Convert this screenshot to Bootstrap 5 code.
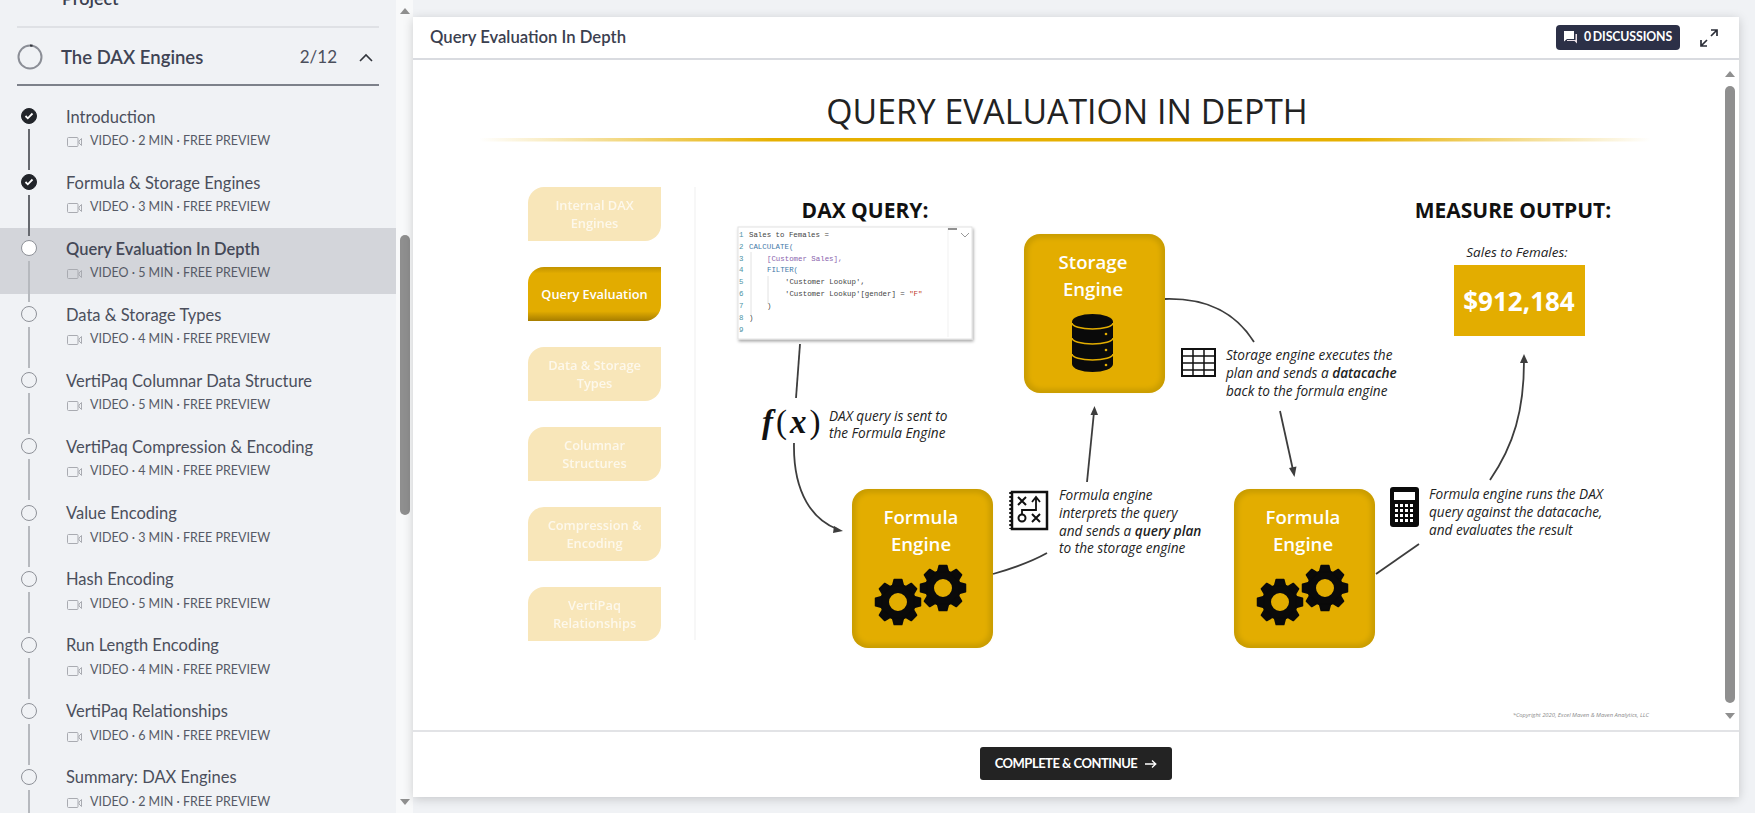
<!DOCTYPE html>
<html lang="en"><head><meta charset="utf-8"><title>Query Evaluation In Depth</title>
<link rel="stylesheet" href="https://cdn.jsdelivr.net/npm/bootstrap@5.3.0/dist/css/bootstrap.min.css">
<style>
html,body{height:813px;overflow:hidden}
body{background:#f0f2f5;font-family:Lato,"Liberation Sans",sans-serif;color:#3b404f}
.side-pane{width:396px;height:813px;overflow:hidden;flex:none}
.side-project{margin:-16px 17px 0;padding:0 0 0 45px;height:44px;border-bottom:2px solid #dfe1e5;font-size:18px;font-weight:600;line-height:28px}
.side-section{margin:0 17px 10px;height:58px;padding-top:2px;border-bottom:2px solid #7d818a}
.side-section h2{font-size:18.5px;font-weight:600;margin:0 0 0 18px;color:#3f4454}
.sec-count{font-size:17px;color:#4b4f5c;margin-right:22px}
.sec-chev{margin-right:6px}
.lesson-row{height:66.1px;padding-left:21px;color:#4b4f5c}
.lesson-row.is-current{background:#d3d5da}
.lesson-row.is-current .lesson-name{font-weight:600;color:#444857}
.lesson-rail{width:16px;flex:none;margin-right:29px;padding-top:12px}
.lesson-dot{width:16px;height:16px;border-radius:50%;border:1.5px solid #8e9198;background:transparent;flex:none}
.is-done .lesson-dot{background:#22252a;border-color:#22252a}
.is-current .lesson-dot{background:#fff}
.lesson-line{width:2px;height:41px;margin-top:5px;background:#b6b9be;flex:none}
.is-done .lesson-line{background:#66696f}
.lesson-name{font-size:16.5px;line-height:20px;padding-top:10.5px;white-space:nowrap}
.lesson-meta{font-size:12.5px;line-height:16px;margin-top:6.5px;white-space:nowrap;color:#565a66}
.lesson-meta svg{margin:0 8px 0 1px;vertical-align:-2px}
.fake-scroll{width:17px;height:813px;flex:none;background:#f8f9fa}
.fake-thumb{width:10px;background:#8f8f8f;border-radius:5px}
.side-thumb{height:280px;margin:221px 0 0 4px}
.arrow-up{width:0;height:0;border-left:5px solid transparent;border-right:5px solid transparent;border-bottom:6px solid #8f8f8f}
.arrow-down{width:0;height:0;border-left:5px solid transparent;border-right:5px solid transparent;border-top:6px solid #8f8f8f}
.main-pane{padding:17px 16px 16px 0;height:813px}
.lesson-card{height:780px;box-shadow:0 2px 10px rgba(0,0,0,.18)}
.lesson-head{height:43px;padding:0 21px 0 17px;background:#fff;border-bottom:2px solid #d9dbe0}
.lesson-head h1{font-size:16.7px;font-weight:600;margin:0;color:#3b404f}
.disc-btn{height:25px;width:124px;padding:0;background:#2c3047;color:#fff;font-size:12.3px;font-weight:700;border:0;border-radius:4px;margin-right:20px;letter-spacing:-.1px;word-spacing:-1px;column-gap:6px}
.slide-wrap{height:670px}
.slide-art{display:block;width:1311px;height:670px;flex:none}
.slide-scroll{width:15px;height:670px;flex:none}
.slide-up{margin:11px 0 0 1px}
.slide-thumb{height:617px;margin:9px 0 10px 1px}
.slide-down{margin-left:1px}
.lesson-foot{height:67px;background:#fff;border-top:2px solid #e2e3e6;padding-bottom:2px}
.next-btn{width:192px;height:33px;padding:0;background:#232323;color:#fff;font-size:13px;font-weight:700;border:0;border-radius:3px;letter-spacing:-.5px}
.next-btn:hover{background:#232323;color:#fff}
.disc-btn:hover{background:#2c3047;color:#fff}
.sl{font-family:"Open Sans","Liberation Sans",sans-serif}
.sl-note{font-size:13.6px;font-style:italic;fill:#222}
.sl-note tspan{font-weight:600}
.sl-head{font-size:21px;font-weight:700;fill:#111;text-anchor:middle}
.sl-tab{font-size:12.8px;font-weight:600;fill:#fff;text-anchor:middle}
.sl-eng{font-size:18.6px;font-weight:600;fill:#fff;text-anchor:middle}
.sl-code{font-family:"Liberation Mono",monospace;font-size:7.4px;fill:#444}
.sl-num{font-family:"Liberation Mono",monospace;font-size:7.4px;fill:#4d93a5}
.flow{fill:none;stroke:#3d3d3d;stroke-width:1.8}
</style></head>
<body class="d-flex">
<aside class="side-pane">
  <div class="side-project">Project</div>
  <div class="side-section d-flex align-items-center">
    <svg width="26" height="26" viewBox="0 0 26 26"><circle cx="13" cy="13" r="11.5" fill="none" stroke="#8b8e96" stroke-width="2"/><path d="M13 1.500A11.500 11.500 0 0 1 15.500 1.800" fill="none" stroke="#33363d" stroke-width="2"/></svg>
    <h2 class="flex-grow-1">The DAX Engines</h2>
    <span class="sec-count">2/12</span>
    <svg width="14" height="9" viewBox="0 0 14 9" class="sec-chev"><path d="M1 8l6-6 6 6" fill="none" stroke="#33363d" stroke-width="1.600"/></svg>
  </div>
  <div class="lesson-row is-done d-flex"><div class="lesson-rail d-flex flex-column align-items-center"><div class="lesson-dot d-flex align-items-center justify-content-center"><svg width="10" height="8" viewBox="0 0 10 8"><path d="M1.500 4l2.300 2.300L8.500 1.500" fill="none" stroke="#fff" stroke-width="1.800"/></svg></div><div class="lesson-line"></div></div><div><div class="lesson-name">Introduction</div><div class="lesson-meta"><svg width="15" height="10" viewBox="0 0 15 10"><rect x=".5" y=".5" width="10.500" height="9" rx="1" fill="none" stroke="#a9abb1"/><path d="M14.500 1.500v7l-2.500-2.500v-2z" fill="none" stroke="#a9abb1"/></svg>VIDEO · 2 MIN · FREE PREVIEW</div></div></div>
  <div class="lesson-row is-done d-flex"><div class="lesson-rail d-flex flex-column align-items-center"><div class="lesson-dot d-flex align-items-center justify-content-center"><svg width="10" height="8" viewBox="0 0 10 8"><path d="M1.500 4l2.300 2.300L8.500 1.500" fill="none" stroke="#fff" stroke-width="1.800"/></svg></div><div class="lesson-line"></div></div><div><div class="lesson-name">Formula &amp; Storage Engines</div><div class="lesson-meta"><svg width="15" height="10" viewBox="0 0 15 10"><rect x=".5" y=".5" width="10.500" height="9" rx="1" fill="none" stroke="#a9abb1"/><path d="M14.500 1.500v7l-2.500-2.500v-2z" fill="none" stroke="#a9abb1"/></svg>VIDEO · 3 MIN · FREE PREVIEW</div></div></div>
  <div class="lesson-row is-current d-flex"><div class="lesson-rail d-flex flex-column align-items-center"><div class="lesson-dot"></div><div class="lesson-line"></div></div><div><div class="lesson-name">Query Evaluation In Depth</div><div class="lesson-meta"><svg width="15" height="10" viewBox="0 0 15 10"><rect x=".5" y=".5" width="10.500" height="9" rx="1" fill="none" stroke="#a9abb1"/><path d="M14.500 1.500v7l-2.500-2.500v-2z" fill="none" stroke="#a9abb1"/></svg>VIDEO · 5 MIN · FREE PREVIEW</div></div></div>
  <div class="lesson-row d-flex"><div class="lesson-rail d-flex flex-column align-items-center"><div class="lesson-dot"></div><div class="lesson-line"></div></div><div><div class="lesson-name">Data &amp; Storage Types</div><div class="lesson-meta"><svg width="15" height="10" viewBox="0 0 15 10"><rect x=".5" y=".5" width="10.500" height="9" rx="1" fill="none" stroke="#a9abb1"/><path d="M14.500 1.500v7l-2.500-2.500v-2z" fill="none" stroke="#a9abb1"/></svg>VIDEO · 4 MIN · FREE PREVIEW</div></div></div>
  <div class="lesson-row d-flex"><div class="lesson-rail d-flex flex-column align-items-center"><div class="lesson-dot"></div><div class="lesson-line"></div></div><div><div class="lesson-name">VertiPaq Columnar Data Structure</div><div class="lesson-meta"><svg width="15" height="10" viewBox="0 0 15 10"><rect x=".5" y=".5" width="10.500" height="9" rx="1" fill="none" stroke="#a9abb1"/><path d="M14.500 1.500v7l-2.500-2.500v-2z" fill="none" stroke="#a9abb1"/></svg>VIDEO · 5 MIN · FREE PREVIEW</div></div></div>
  <div class="lesson-row d-flex"><div class="lesson-rail d-flex flex-column align-items-center"><div class="lesson-dot"></div><div class="lesson-line"></div></div><div><div class="lesson-name">VertiPaq Compression &amp; Encoding</div><div class="lesson-meta"><svg width="15" height="10" viewBox="0 0 15 10"><rect x=".5" y=".5" width="10.500" height="9" rx="1" fill="none" stroke="#a9abb1"/><path d="M14.500 1.500v7l-2.500-2.500v-2z" fill="none" stroke="#a9abb1"/></svg>VIDEO · 4 MIN · FREE PREVIEW</div></div></div>
  <div class="lesson-row d-flex"><div class="lesson-rail d-flex flex-column align-items-center"><div class="lesson-dot"></div><div class="lesson-line"></div></div><div><div class="lesson-name">Value Encoding</div><div class="lesson-meta"><svg width="15" height="10" viewBox="0 0 15 10"><rect x=".5" y=".5" width="10.500" height="9" rx="1" fill="none" stroke="#a9abb1"/><path d="M14.500 1.500v7l-2.500-2.500v-2z" fill="none" stroke="#a9abb1"/></svg>VIDEO · 3 MIN · FREE PREVIEW</div></div></div>
  <div class="lesson-row d-flex"><div class="lesson-rail d-flex flex-column align-items-center"><div class="lesson-dot"></div><div class="lesson-line"></div></div><div><div class="lesson-name">Hash Encoding</div><div class="lesson-meta"><svg width="15" height="10" viewBox="0 0 15 10"><rect x=".5" y=".5" width="10.500" height="9" rx="1" fill="none" stroke="#a9abb1"/><path d="M14.500 1.500v7l-2.500-2.500v-2z" fill="none" stroke="#a9abb1"/></svg>VIDEO · 5 MIN · FREE PREVIEW</div></div></div>
  <div class="lesson-row d-flex"><div class="lesson-rail d-flex flex-column align-items-center"><div class="lesson-dot"></div><div class="lesson-line"></div></div><div><div class="lesson-name">Run Length Encoding</div><div class="lesson-meta"><svg width="15" height="10" viewBox="0 0 15 10"><rect x=".5" y=".5" width="10.500" height="9" rx="1" fill="none" stroke="#a9abb1"/><path d="M14.500 1.500v7l-2.500-2.500v-2z" fill="none" stroke="#a9abb1"/></svg>VIDEO · 4 MIN · FREE PREVIEW</div></div></div>
  <div class="lesson-row d-flex"><div class="lesson-rail d-flex flex-column align-items-center"><div class="lesson-dot"></div><div class="lesson-line"></div></div><div><div class="lesson-name">VertiPaq Relationships</div><div class="lesson-meta"><svg width="15" height="10" viewBox="0 0 15 10"><rect x=".5" y=".5" width="10.500" height="9" rx="1" fill="none" stroke="#a9abb1"/><path d="M14.500 1.500v7l-2.500-2.500v-2z" fill="none" stroke="#a9abb1"/></svg>VIDEO · 6 MIN · FREE PREVIEW</div></div></div>
  <div class="lesson-row d-flex"><div class="lesson-rail d-flex flex-column align-items-center"><div class="lesson-dot"></div><div class="lesson-line"></div></div><div><div class="lesson-name">Summary: DAX Engines</div><div class="lesson-meta"><svg width="15" height="10" viewBox="0 0 15 10"><rect x=".5" y=".5" width="10.500" height="9" rx="1" fill="none" stroke="#a9abb1"/><path d="M14.500 1.500v7l-2.500-2.500v-2z" fill="none" stroke="#a9abb1"/></svg>VIDEO · 2 MIN · FREE PREVIEW</div></div></div>
</aside>
<div class="fake-scroll d-flex flex-column">
  <div class="arrow-up ms-1 mt-2"></div>
  <div class="fake-thumb side-thumb"></div>
  <div class="arrow-down ms-1 mt-auto mb-2"></div>
</div>
<main class="main-pane flex-grow-1">
  <div class="card lesson-card rounded-0 border-0">
    <div class="lesson-head d-flex align-items-center">
      <h1 class="flex-grow-1">Query Evaluation In Depth</h1>
      <button class="btn disc-btn d-flex align-items-center justify-content-center" type="button"><svg width="14" height="13" viewBox="0 0 14 13"><path d="M0 0h10v8H3L0 10.500z" fill="#fff"/><path d="M11.500 3H13v9.500L10.500 10H3V9h8.500z" fill="#e9dfe6"/></svg>0 DISCUSSIONS</button>
      <svg width="18" height="18" viewBox="0 0 18 18"><path d="M11 1h6v6M17 1l-6 6M7 17H1v-6M1 17l6-6" fill="none" stroke="#2b2e38" stroke-width="1.700"/></svg>
    </div>
    <div class="slide-wrap d-flex bg-white">
      <svg class="slide-art sl" viewBox="414 60 1311 670" xmlns="http://www.w3.org/2000/svg">
        <defs>
          <linearGradient id="rule"><stop offset="0" stop-color="#e6b000" stop-opacity="0"/><stop offset=".25" stop-color="#e6b000"/><stop offset=".75" stop-color="#e6b000"/><stop offset="1" stop-color="#e6b000" stop-opacity="0"/></linearGradient>
          <linearGradient id="activetab" x1="0" y1="0" x2="0" y2="1"><stop offset="0" stop-color="#c29300"/><stop offset=".12" stop-color="#e2ac00"/><stop offset=".82" stop-color="#e2ac00"/><stop offset="1" stop-color="#a67d00"/></linearGradient>
          <filter id="soft" x="-10%" y="-10%" width="120%" height="120%"><feGaussianBlur stdDeviation="2.500"/></filter>
          <filter id="boxshade" x="-5%" y="-5%" width="112%" height="112%"><feDropShadow dx="1" dy="2" stdDeviation="1.500" flood-color="#000" flood-opacity=".35"/></filter>
          <path id="tabshape" d="M0 16a16 16 0 0 1 16-16H133V38a16 16 0 0 1-16 16H0Z"/>
          <path id="tooth" d="M-5.500-16L-3.800-22.500H3.800L5.500-16Z" fill="#0a0a0a" stroke="#0a0a0a" stroke-width="1.500" stroke-linejoin="round"/>
          <g id="gear"><circle r="13.500" fill="none" stroke="#0a0a0a" stroke-width="9"/><use href="#tooth"/><use href="#tooth" transform="rotate(45)"/><use href="#tooth" transform="rotate(90)"/><use href="#tooth" transform="rotate(135)"/><use href="#tooth" transform="rotate(180)"/><use href="#tooth" transform="rotate(225)"/><use href="#tooth" transform="rotate(270)"/><use href="#tooth" transform="rotate(315)"/></g>
          <g id="engine"><rect width="141" height="159" rx="16" fill="#c99c00"/><rect x="4" y="4" width="133" height="151" rx="13" fill="#e3ad00" filter="url(#soft)"/></g>
        </defs>
        <text x="1068" y="124" font-size="33.800" text-anchor="middle" fill="#222">QUERY EVALUATION IN DEPTH</text>
        <rect x="480" y="138" width="1172" height="3.500" fill="url(#rule)"/>

        <g fill="#f8e6b9"><use href="#tabshape" x="529" y="187"/><use href="#tabshape" x="529" y="347"/><use href="#tabshape" x="529" y="427"/><use href="#tabshape" x="529" y="507"/><use href="#tabshape" x="529" y="587"/></g>
        <path d="M529 283a16 16 0 0 1 16-16H662V305a16 16 0 0 1-16 16H529Z" fill="url(#activetab)"/>
        <g class="sl-tab" opacity=".72">
          <text x="595.500" y="210">Internal DAX</text><text x="595.500" y="228">Engines</text>
          <text x="595.500" y="370">Data &amp; Storage</text><text x="595.500" y="388">Types</text>
          <text x="595.500" y="450">Columnar</text><text x="595.500" y="468">Structures</text>
          <text x="595.500" y="530">Compression &amp;</text><text x="595.500" y="548">Encoding</text>
          <text x="595.500" y="610">VertiPaq</text><text x="595.500" y="628">Relationships</text>
        </g>
        <text class="sl-tab" x="595.500" y="299">Query Evaluation</text>
        <line x1="696" y1="187" x2="696" y2="640" stroke="#efefef" stroke-width="1"/>

        <text class="sl-head" x="866" y="218">DAX QUERY:</text>
        <rect x="739" y="227" width="234" height="112" fill="#fff" stroke="#e2e2e2" filter="url(#boxshade)"/>
        <line x1="949" y1="228" x2="949" y2="337" stroke="#f1f1f1"/>
        <line x1="949" y1="229" x2="958" y2="229" stroke="#555" stroke-width="1.300"/>
        <path d="M962 233l4 4 4-4" fill="none" stroke="#999"/>
        <g stroke="#e2e2e2"><line x1="752" y1="252" x2="752" y2="316"/><line x1="769" y1="276" x2="769" y2="304"/></g>
        <g class="sl-num"><text x="740" y="237">1</text><text x="740" y="249">2</text><text x="740" y="261">3</text><text x="740" y="272">4</text><text x="740" y="284">5</text><text x="740" y="296">6</text><text x="740" y="308">7</text><text x="740" y="320">8</text><text x="740" y="332">9</text></g>
        <g class="sl-code">
          <text x="750" y="237">Sales to Females =</text>
          <text x="750" y="249" fill="#3f78a8">CALCULATE(</text>
          <text x="768" y="261" fill="#8a63ad">[Customer Sales],</text>
          <text x="768" y="272" fill="#3f78a8">FILTER(</text>
          <text x="786" y="284">'Customer Lookup',</text>
          <text x="786" y="296">'Customer Lookup'[gender] = <tspan fill="#c0392b">"F"</tspan></text>
          <text x="768" y="308">)</text>
          <text x="750" y="320">)</text>
        </g>
        <path class="flow" d="M801 344L797 398"/>
        <text x="763" y="433" font-family="Liberation Serif" font-size="33" font-weight="700" font-style="italic" fill="#111" letter-spacing="3">f<tspan font-style="normal" font-weight="400">(</tspan>x<tspan font-style="normal" font-weight="400">)</tspan></text>
        <text class="sl-note" x="830" y="421">DAX query is sent to</text>
        <text class="sl-note" x="830" y="438">the Formula Engine</text>
        <path class="flow" d="M795 443C794 495 815 520 838 529"/>
        <path d="M844 531l-9-5-1 7z" fill="#3d3d3d"/>

        <use href="#engine" x="853" y="489"/>
        <text class="sl-eng" x="922" y="524">Formula</text><text class="sl-eng" x="922" y="551">Engine</text>
        <use href="#gear" x="899" y="602"/><use href="#gear" x="944" y="588"/>

        <use href="#engine" x="1025" y="234"/>
        <text class="sl-eng" x="1094" y="269">Storage</text><text class="sl-eng" x="1094" y="296">Engine</text>
        <path d="M1073 322a20.500 8 0 0 1 41 0V364a20.500 8 0 0 1-41 0Z" fill="#0a0a0a"/>
        <g fill="none" stroke="#e3ad00" stroke-width="1.600"><path d="M1073 323a20.500 6 0 0 0 41 0"/><path d="M1073 338a20.500 6 0 0 0 41 0"/><path d="M1073 354a20.500 6 0 0 0 41 0"/></g>
        <g fill="#e3ad00"><circle cx="1107" cy="334" r="1.300"/><circle cx="1107" cy="350" r="1.300"/><circle cx="1107" cy="365" r="1.300"/></g>

        <path class="flow" d="M1166 299C1205 298 1235 310 1255 342"/>
        <g fill="none" stroke="#111"><rect x="1183" y="349" width="33" height="27" stroke-width="2"/><path d="M1183 356H1216M1183 363H1216M1183 370H1216M1194 349V376M1205 349V376" stroke-width="1.500"/></g>
        <text class="sl-note" x="1227" y="360">Storage engine executes the</text>
        <text class="sl-note" x="1227" y="378">plan and sends a <tspan>datacache</tspan></text>
        <text class="sl-note" x="1227" y="396">back to the formula engine</text>

        <path class="flow" d="M1088 482L1095 412"/>
        <path d="M1095.500 406l-4 9h7.500z" fill="#3d3d3d"/>
        <g fill="none" stroke="#111"><rect x="1013" y="492" width="35" height="37" stroke-width="2.500"/><path d="M1019 497l8 8m0-8l-8 8M1033 514l8 8m0-8l-8 8" stroke-width="2"/><circle cx="1023" cy="518" r="3.500" stroke-width="2"/><path d="M1023 514V510H1037V498M1033 502l4-5 4 5" stroke-width="1.800"/><path d="M1012 492v37" stroke-width="3.500" stroke-dasharray="2 2"/></g>
        <text class="sl-note" x="1060" y="500">Formula engine</text>
        <text class="sl-note" x="1060" y="518">interprets the query</text>
        <text class="sl-note" x="1060" y="536">and sends a <tspan>query plan</tspan></text>
        <text class="sl-note" x="1060" y="553">to the storage engine</text>
        <path class="flow" d="M994 574C1015 568 1032 562 1048 553"/>

        <path class="flow" d="M1281 411L1294 470"/>
        <path d="M1295.500 477l-5.500-9 7.500-1.500z" fill="#3d3d3d"/>
        <use href="#engine" x="1235" y="489"/>
        <text class="sl-eng" x="1304" y="524">Formula</text><text class="sl-eng" x="1304" y="551">Engine</text>
        <use href="#gear" x="1281" y="602"/><use href="#gear" x="1326" y="588"/>

        <rect x="1391" y="487" width="29" height="40" rx="3" fill="#0a0a0a"/>
        <rect x="1395" y="492" width="21" height="8" fill="#fff"/>
        <g stroke="#fff" stroke-width="3" stroke-dasharray="3 2"><line x1="1396" y1="505.500" x2="1416" y2="505.500"/><line x1="1396" y1="510.500" x2="1416" y2="510.500"/><line x1="1396" y1="515.500" x2="1416" y2="515.500"/><line x1="1396" y1="520.500" x2="1416" y2="520.500"/></g>
        <text class="sl-note" x="1430" y="499">Formula engine runs the DAX</text>
        <text class="sl-note" x="1430" y="517">query against the datacache,</text>
        <text class="sl-note" x="1430" y="535">and evaluates the result</text>
        <path class="flow" d="M1377 574L1420 544"/>
        <path class="flow" d="M1491 480C1515 445 1525 410 1525 361"/>
        <path d="M1525 354l-4 9h8z" fill="#3d3d3d"/>

        <text class="sl-head" x="1514" y="218">MEASURE OUTPUT:</text>
        <text x="1518" y="257" font-size="13.500" font-style="italic" text-anchor="middle" fill="#222">Sales to Females:</text>
        <rect x="1455" y="265" width="131" height="71" fill="#e3ad00"/>
        <text x="1520" y="311" font-size="26" font-weight="700" text-anchor="middle" fill="#fff">$912,184</text>
        <text x="1650" y="717" font-size="5.800" font-style="italic" text-anchor="end" fill="#8a8a8a">*Copyright 2020, Excel Maven &amp; Maven Analytics, LLC</text>
      </svg>
      <div class="slide-scroll d-flex flex-column">
        <div class="arrow-up slide-up"></div>
        <div class="fake-thumb slide-thumb"></div>
        <div class="arrow-down slide-down"></div>
      </div>
    </div>
    <div class="lesson-foot d-flex align-items-center justify-content-center">
      <button class="btn next-btn d-flex align-items-center justify-content-center gap-2" type="button">COMPLETE &amp; CONTINUE <svg width="12" height="10" viewBox="0 0 12 10"><path d="M0 5h10.500M7 1.500L10.800 5 7 8.500" fill="none" stroke="#fff" stroke-width="1.300"/></svg></button>
    </div>
  </div>
</main>
</body></html>
